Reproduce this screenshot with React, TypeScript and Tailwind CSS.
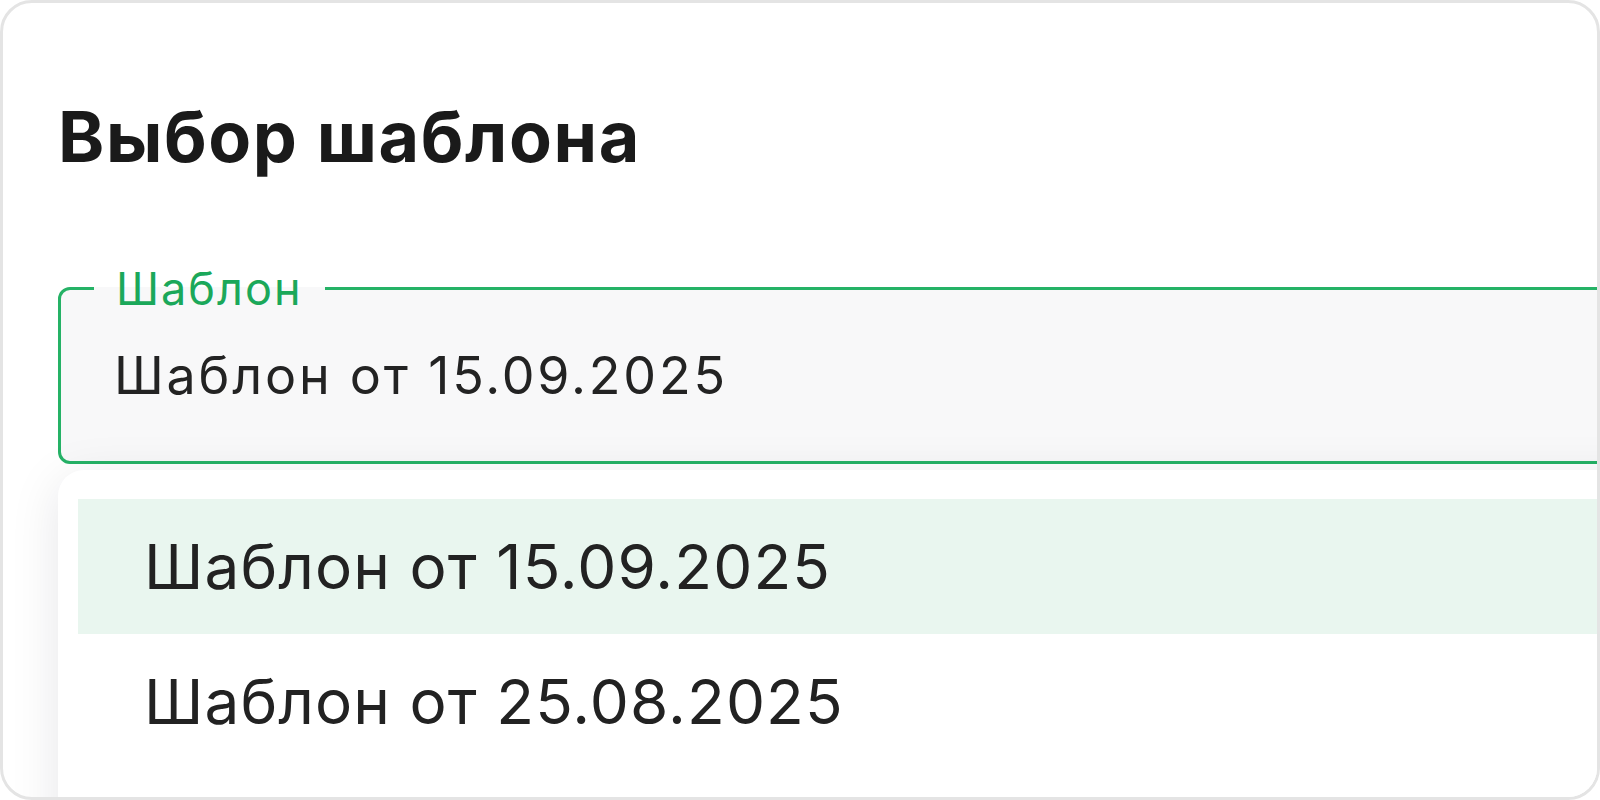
export default function App() {
  const options = ["Шаблон от 15.09.2025", "Шаблон от 25.08.2025"];
  const selected = 0;

  return (
    <div className="w-[1600px] h-[800px] bg-white">
      <div
        className="w-full h-full overflow-hidden rounded-[32px] border-[3px] border-[#e4e4e4] bg-white pl-[55px] pt-[99px]"
        style={{ fontFamily: "Inter, 'Noto Sans', sans-serif" }}
      >
        {/* Title */}
        <h1 className="text-[70px] leading-none font-bold text-[#1a1a1a] tracking-[1.6px]">
          Выбор шаблона
        </h1>

        {/* Select field */}
        <fieldset className="mt-[94px] w-[1620px] rounded-[12px] border-[3px] border-[#25b266] bg-[#f8f8f9] px-0 pb-[59px]">
          <legend className="ml-[33px] px-[22px] text-[45px] leading-none text-[#1ba85a] tracking-[2px]">
            Шаблон
          </legend>
          <div className="pl-[53px] pt-[39px] text-[52px] leading-none text-[#232323] tracking-[2.8px]">
            {options[selected]}
          </div>
        </fieldset>

        {/* Dropdown */}
        <div className="mt-[6px] w-[1620px] h-[400px] rounded-[26px] bg-white px-[20px] pt-[29px] shadow-[0_10px_50px_rgba(20,20,40,0.10)]">
          {options.map((opt, i) => (
            <div
              key={opt}
              className={
                "h-[135px] flex items-center pl-[66px] text-[62px] leading-none text-[#222222] tracking-[1.1px] " +
                (i === selected ? "bg-[#e9f6ef]" : "")
              }
            >
              {opt}
            </div>
          ))}
        </div>
      </div>
    </div>
  );
}
